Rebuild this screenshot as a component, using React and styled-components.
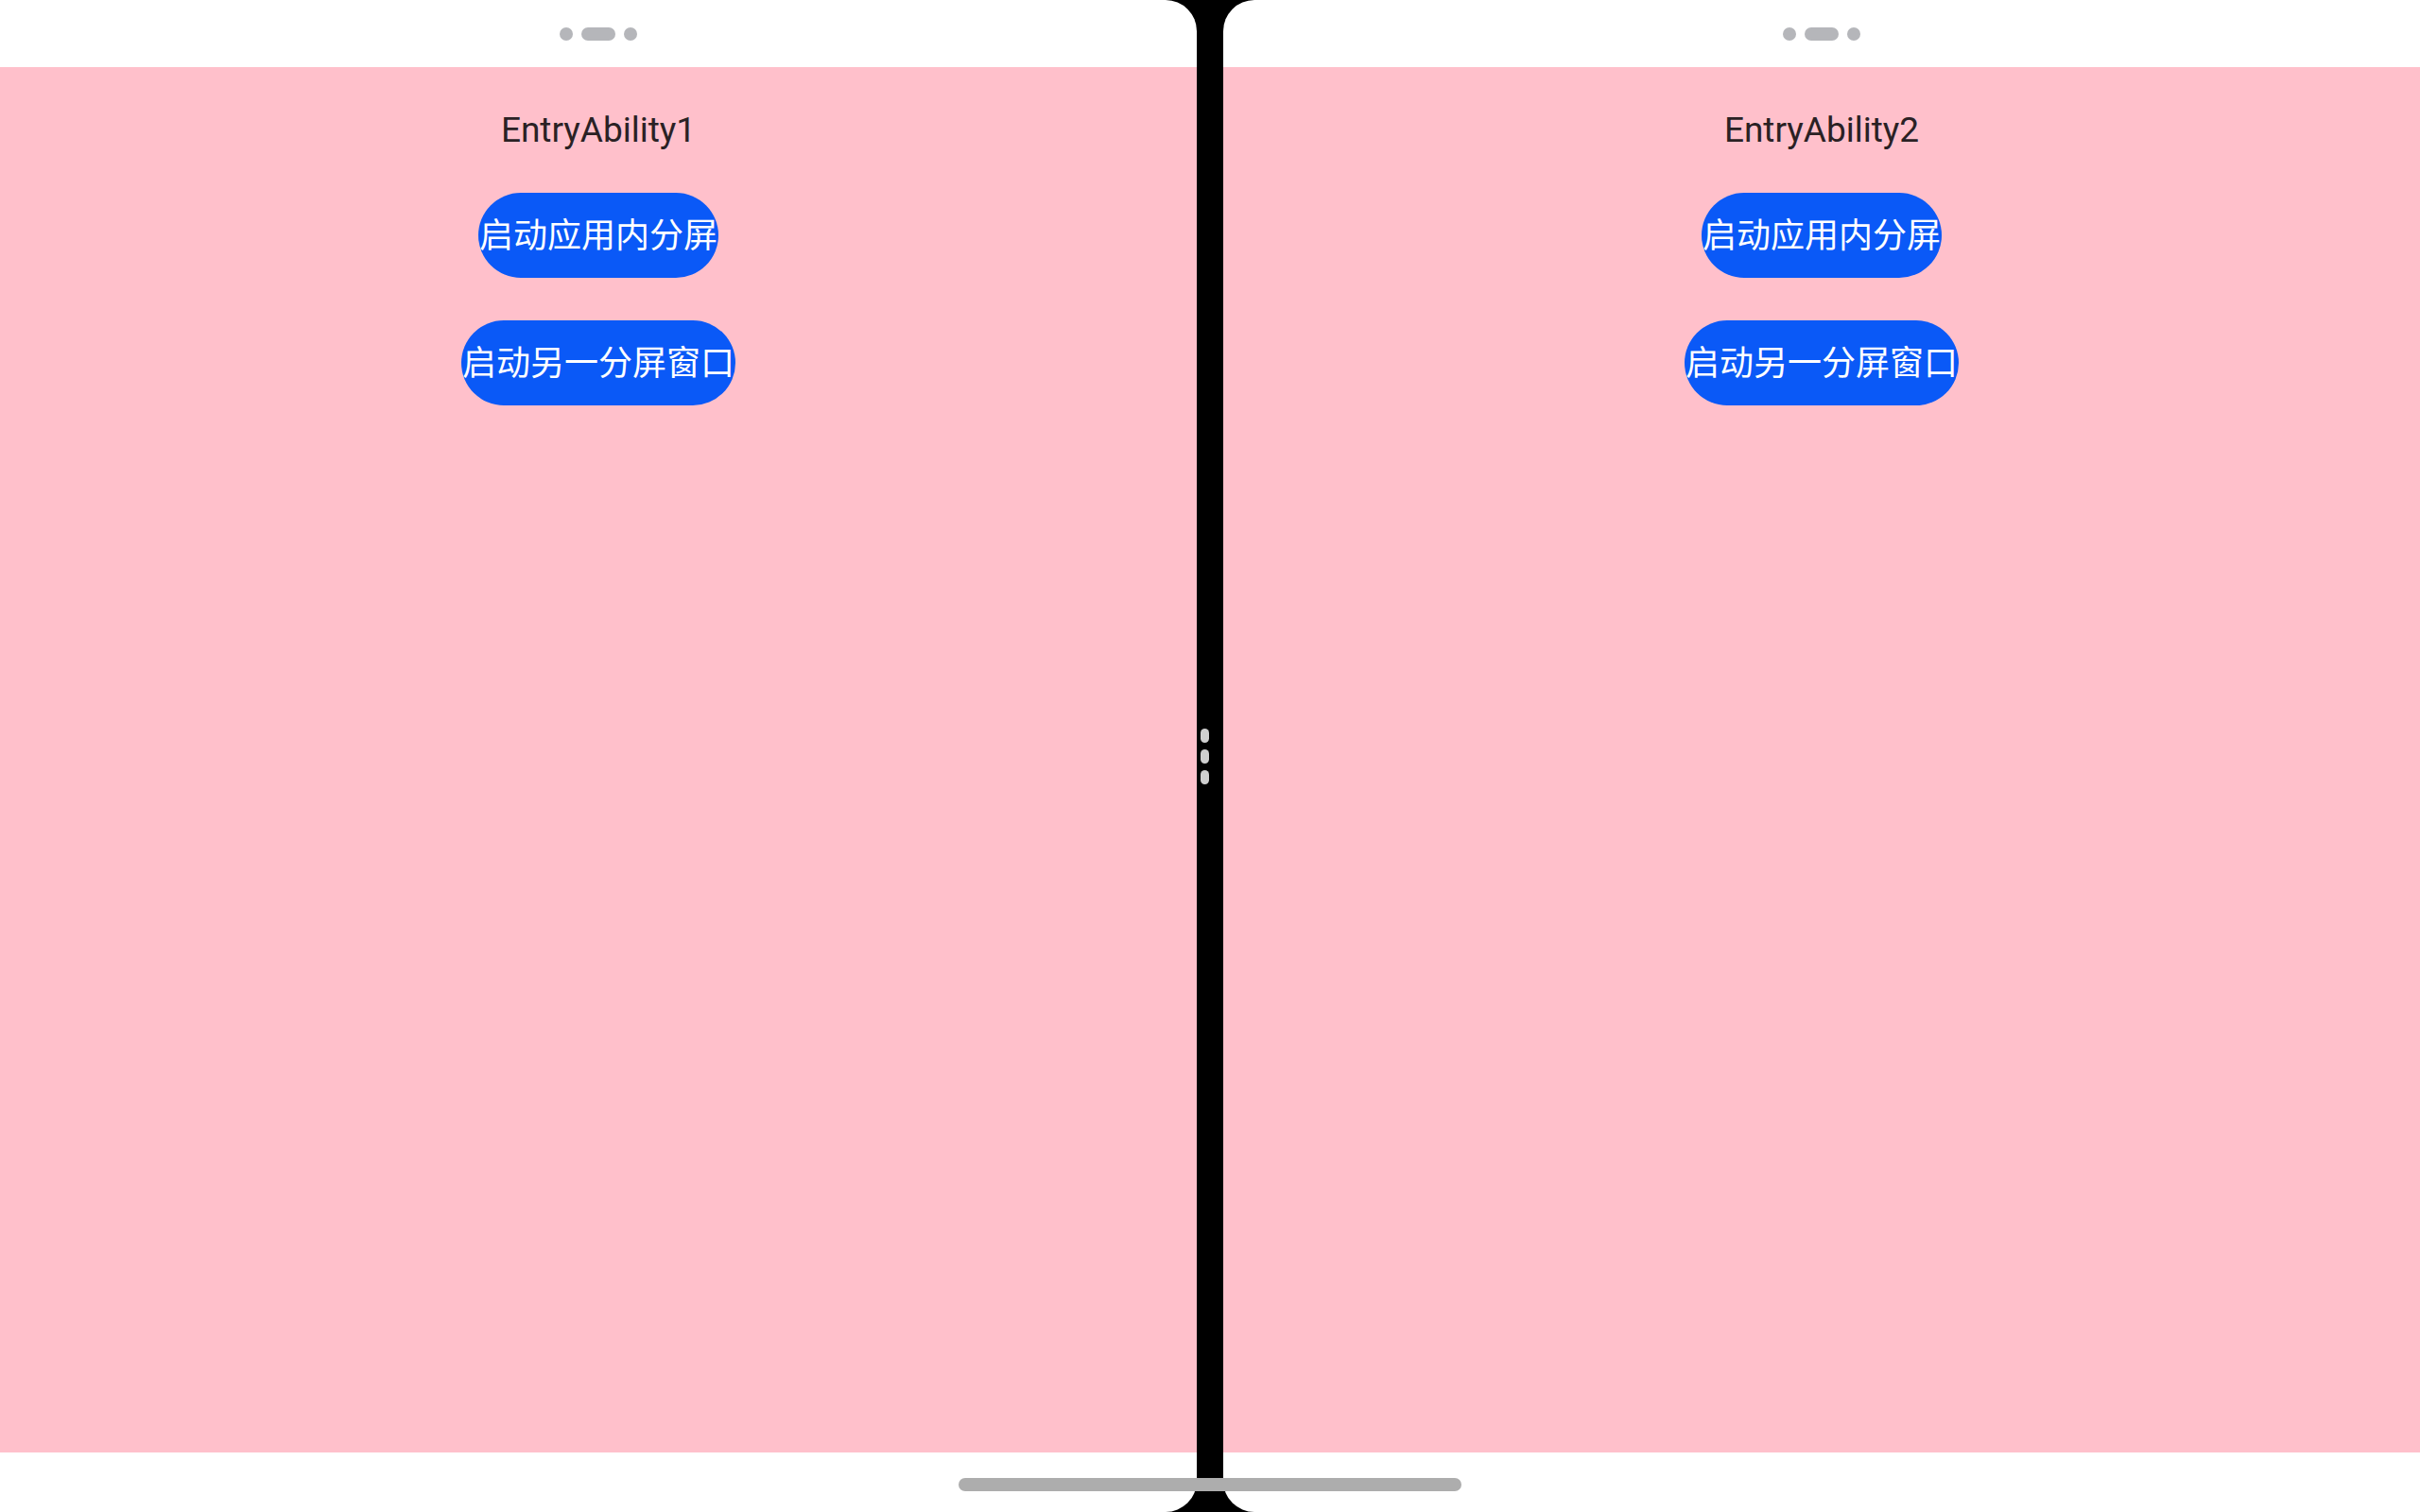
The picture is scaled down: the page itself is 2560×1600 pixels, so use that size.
import React from 'react';
import styled, { createGlobalStyle } from 'styled-components';

const GlobalStyle = createGlobalStyle`
	html, body {
		margin: 0;
		padding: 0;
		background: #000;
	}
`;

const panes = [
	{ id: 1, side: 'left', title: 'EntryAbility1' },
	{ id: 2, side: 'right', title: 'EntryAbility2' },
];

const buttons = ['启动应用内分屏', '启动另一分屏窗口'];

const App = () => {
	return (
		<Screen>
			<GlobalStyle />
			{panes.map((pane, i) => (
				<React.Fragment key={pane.id}>
					{i === 1 && (
						<Divider>
							<Handle>
								<HandleDot />
								<HandleDot />
								<HandleDot />
							</Handle>
						</Divider>
					)}
					<Pane $side={pane.side}>
						<StatusBar>
							<Dot />
							<Pill />
							<Dot />
						</StatusBar>
						<Content>
							<Title>{pane.title}</Title>
							{buttons.map((label) => (
								<SplitButton key={label}>{label}</SplitButton>
							))}
						</Content>
						<BottomBar />
					</Pane>
				</React.Fragment>
			))}
			<HomeBar />
		</Screen>
	);
};

export default App;

const Screen = styled.div`
	position: relative;
	display: flex;
	width: 2560px;
	height: 1600px;
	background: #000;
	overflow: hidden;
`;

const Pane = styled.div`
	display: flex;
	flex-direction: column;
	width: 1266px;
	height: 100%;
	background: #fff;
	border-radius: ${(p) => (p.$side === 'left' ? '0 33px 33px 0' : '33px 0 0 33px')};
	overflow: hidden;
`;

const StatusBar = styled.div`
	display: flex;
	justify-content: center;
	align-items: center;
	gap: 9px;
	height: 71px;
	flex-shrink: 0;
`;

const Dot = styled.span`
	width: 14px;
	height: 14px;
	border-radius: 50%;
	background: #b5b6ba;
`;

const Pill = styled.span`
	width: 36px;
	height: 14px;
	border-radius: 7px;
	background: #b5b6ba;
`;

const Content = styled.div`
	flex: 1;
	display: flex;
	flex-direction: column;
	align-items: center;
	gap: 45px;
	padding-top: 46px;
	background: #ffc0cb;
`;

const Title = styled.div`
	font-family: Roboto, 'Noto Sans', sans-serif;
	font-size: 37px;
	line-height: 42px;
	color: #2a2124;
`;

const SplitButton = styled.button`
	display: flex;
	align-items: center;
	justify-content: center;
	box-sizing: border-box;
	height: 90px;
	padding: 0 1px 7px;
	border: none;
	border-radius: 45px;
	background: #0a59f7;
	color: #fff;
	font-family: 'Noto Sans CJK SC', 'Noto Sans', sans-serif;
	font-size: 36px;
	white-space: nowrap;
	cursor: pointer;
`;

const BottomBar = styled.div`
	height: 63px;
	flex-shrink: 0;
`;

const Divider = styled.div`
	display: flex;
	flex-direction: column;
	justify-content: center;
	align-items: flex-start;
	width: 28px;
	padding-left: 4px;
	box-sizing: border-box;
	flex-shrink: 0;
`;

const Handle = styled.div`
	display: flex;
	flex-direction: column;
	gap: 7px;
`;

const HandleDot = styled.span`
	width: 9px;
	height: 15px;
	border-radius: 5px;
	background: #cfcfcf;
`;

const HomeBar = styled.div`
	position: absolute;
	left: 50%;
	top: 1564px;
	width: 532px;
	height: 14px;
	margin-left: -266px;
	border-radius: 7px;
	background: #adadad;
`;
